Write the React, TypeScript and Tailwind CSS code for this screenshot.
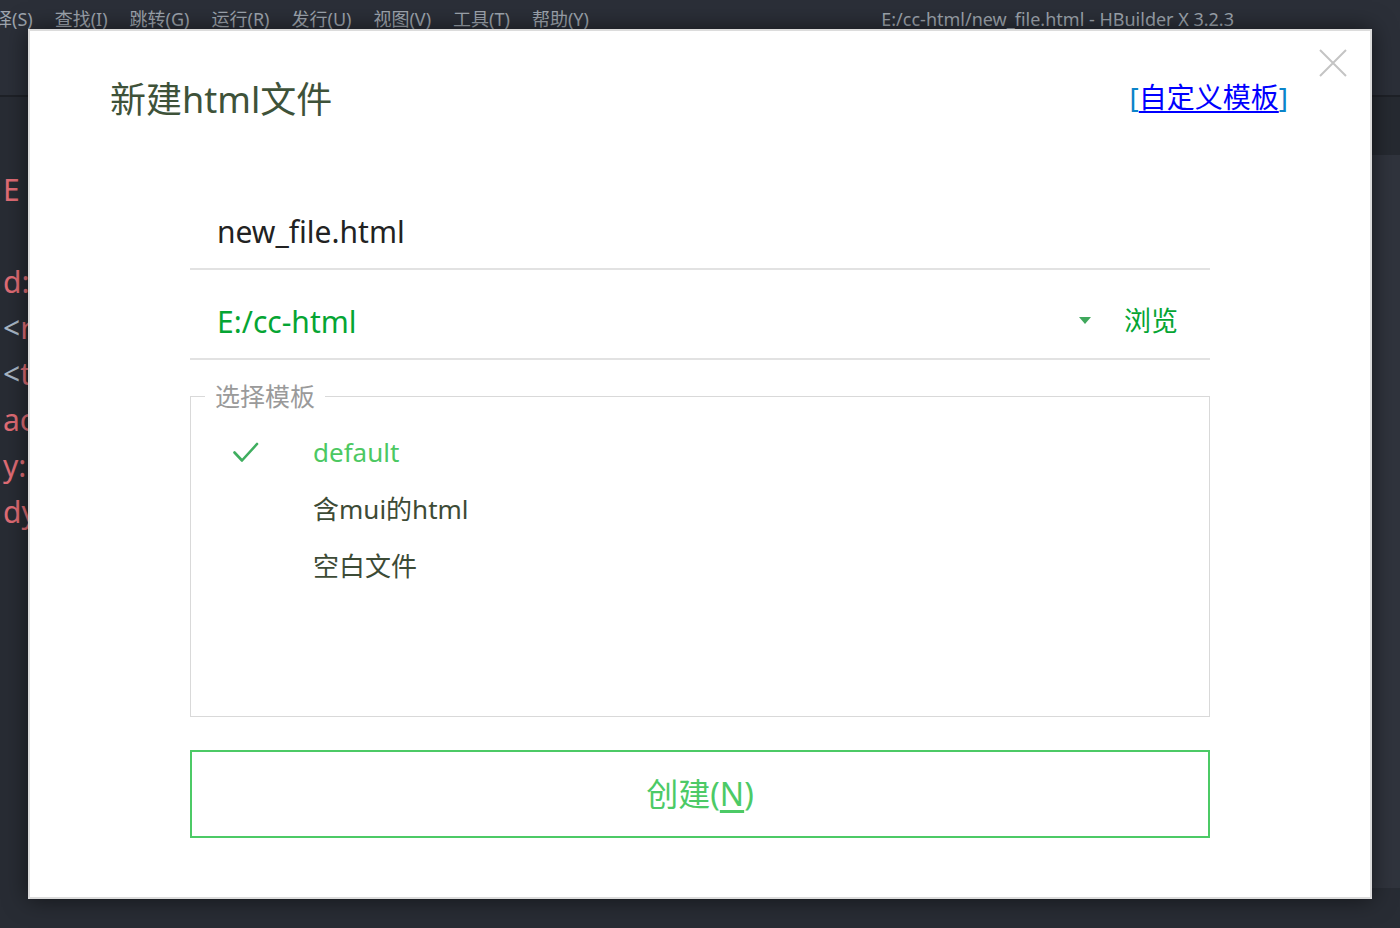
import React from 'react'

const menus = ['译(S)', '查找(I)', '跳转(G)', '运行(R)', '发行(U)', '视图(V)', '工具(T)', '帮助(Y)']

const codeLines: Array<[string, string]> = [
  ['', ''],
  ['', 'E'],
  ['', ''],
  ['', 'd:'],
  ['<', 'r'],
  ['<', 't'],
  ['', 'ac'],
  ['', 'y:'],
  ['', 'dy'],
]

const templates = [
  { name: 'default', active: true },
  { name: '含mui的html', active: false },
  { name: '空白文件', active: false },
]

const CheckIcon: React.FunctionComponent = () => (
  <svg width="26" height="22" viewBox="0 0 26 22" fill="none">
    <path d="M1.5 10.5 L9 18.5 L24 2" stroke="#3fae5f" strokeWidth="2.6" strokeLinecap="round" strokeLinejoin="round" />
  </svg>
)

const CloseIcon: React.FunctionComponent = () => (
  <svg width="28" height="28" viewBox="0 0 28 28" fill="none">
    <path d="M1 1 L27 27 M27 1 L1 27" stroke="#c4c4c4" strokeWidth="2" />
  </svg>
)

const App: React.FunctionComponent = () => {
  return (
    <div
      className="relative w-[1400px] h-[928px] overflow-hidden bg-[#282c34]"
      style={{ fontFamily: '"Noto Sans", "Noto Sans CJK SC", sans-serif' }}
    >
      {/* editor behind the dialog */}
      <div className="flex flex-col h-full">
        <div className="h-[97px] bg-[#2b2f38] border-b-2 border-[#1e2127] flex justify-between">
          <div className="flex gap-[22px] -ml-[6px] h-[38px] items-center text-[18px] text-[#9ea5ae]">
            {menus.map((m) => (
              <span key={m}>{m}</span>
            ))}
          </div>
          <div className="h-[38px] flex items-center pr-[166px] text-[18px] text-[#9ea5ae]">
            E:/cc-html/new_file.html - HBuilder X 3.2.3
          </div>
        </div>
        <div className="flex flex-1">
          <div className="flex-1 pl-[3px] pt-[24px] flex flex-col text-[30px] leading-[46px]">
            {codeLines.map(([a, b], i) => (
              <div key={i} className="h-[46px]">
                <span className="text-[#a9b7c6]">{a}</span>
                <span className="text-[#e06c75]">{b}</span>
              </div>
            ))}
          </div>
          <div className="w-[60px] flex flex-col">
            <div className="h-[58px] bg-[#262a31]" />
            <div className="flex-1 bg-[#30343d]" />
            <div className="h-[40px] bg-[#282c34]" />
          </div>
        </div>
      </div>

      {/* dialog */}
      <div className="absolute left-[28px] top-[29px] w-[1344px] h-[870px] bg-white border-2 border-[#dcdcdc] shadow-[0_0_22px_rgba(0,0,0,0.55)]">
        <button className="absolute right-[23px] top-[18px] w-[28px] h-[28px]">
          <CloseIcon />
        </button>

        <div className="h-[149px] pt-[49px] pl-[80px] pr-[82px]">
          <div className="h-[40px] flex items-center justify-between">
            <h1 className="text-[36px] leading-[40px] text-[#3e5239]">新建html文件</h1>
            <div className="mb-[6px] text-[28px] leading-[34px]">
              <span className="text-[#0b84c9]">[</span>
              <a className="text-[#0000ff] underline underline-offset-[3px]">自定义模板</a>
              <span className="text-[#0b84c9]">]</span>
            </div>
          </div>
        </div>

        <div className="mx-auto w-[1020px] flex flex-col">
          <div className="h-[90px] pt-[14px] pl-[27px] border-b-2 border-[#e2e2e2] flex items-center text-[30px] text-[#222222]">
            new_file.html
          </div>
          <div className="h-[90px] pt-[14px] pl-[27px] pr-[32px] border-b-2 border-[#e2e2e2] flex items-center">
            <span className="flex-1 text-[30px] text-[#05a533]">E:/cc-html</span>
            <svg width="12" height="8" viewBox="0 0 12 8" className="mr-[33px] -mt-[1px]">
              <path d="M0 0 L12 0 L6 7 Z" fill="#3fa85c" />
            </svg>
            <span className="text-[27px] text-[#05a533]">浏览</span>
          </div>

          <fieldset className="m-0 p-0 mt-[21px] h-[336px] border border-[#d9d9d9]">
            <legend className="ml-[14px] px-[10px] text-[25px] leading-[30px] text-[#9a9a9a]">选择模板</legend>
            <div className="pt-[13px] flex flex-col">
              {templates.map((t) => (
                <div key={t.name} className="h-[57px] pl-[42px] flex items-center">
                  <div className="w-[80px] flex items-center">{t.active && <CheckIcon />}</div>
                  <span className={t.active ? 'text-[26px] text-[#4cc862]' : 'text-[26px] text-[#3d4b36]'}>{t.name}</span>
                </div>
              ))}
            </div>
          </fieldset>

          <button className="mt-[33px] h-[88px] border-2 border-[#4cca66] flex items-center justify-center text-[32px] text-[#4cca66]">
            创建(<span className="underline underline-offset-[4px]">N</span>)
          </button>
        </div>
      </div>
    </div>
  )
}

export default App
